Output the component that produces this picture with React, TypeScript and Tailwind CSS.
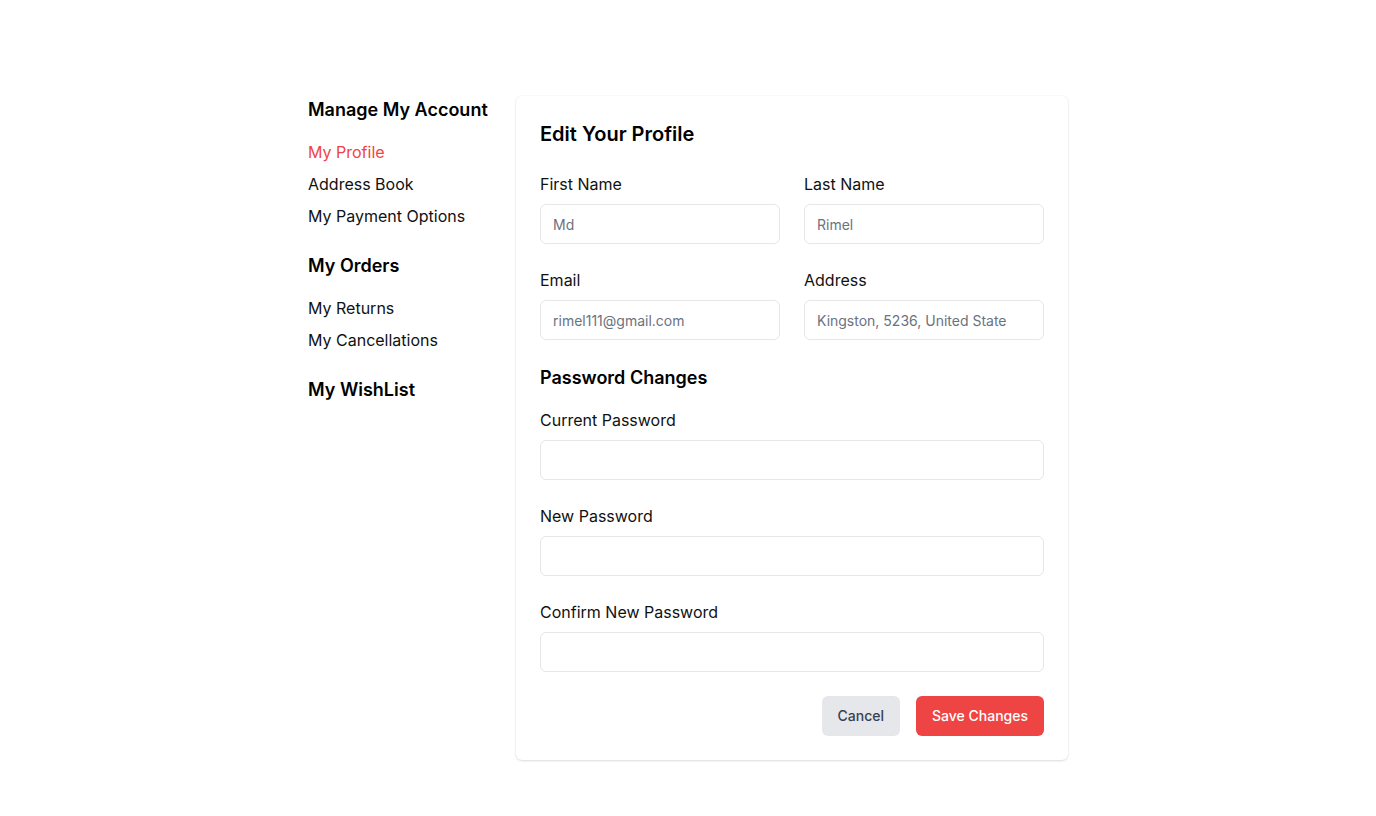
import React from "react";

function Field({ label, placeholder }: { label: string; placeholder?: string }) {
  return (
    <div className="flex flex-col">
      <label className="text-base leading-6 text-[#111] mb-2">{label}</label>
      <input
        className="h-10 w-full rounded-md border border-[#e5e7eb] px-3 text-sm text-gray-700 placeholder:text-[#6b7280] outline-none"
        placeholder={placeholder}
      />
    </div>
  );
}

export default function App() {
  return (
    <div className="min-h-screen bg-white" style={{ fontFamily: "Inter, 'Noto Sans', sans-serif" }}>
      <div className="mx-auto w-[760px] pt-24 flex">
        <aside className="w-[208px] shrink-0">
          <h2 className="text-lg leading-7 font-semibold text-black mb-4">Manage My Account</h2>
          <ul className="space-y-2 text-base leading-6 text-[#111]">
            <li className="text-[#ef4444]">My Profile</li>
            <li>Address Book</li>
            <li>My Payment Options</li>
          </ul>
          <h2 className="text-lg leading-7 font-semibold text-black mt-6 mb-4">My Orders</h2>
          <ul className="space-y-2 text-base leading-6 text-[#111]">
            <li>My Returns</li>
            <li>My Cancellations</li>
          </ul>
          <h2 className="text-lg leading-7 font-semibold text-black mt-6">My WishList</h2>
        </aside>
        <main className="flex-1 rounded-md bg-white p-6 shadow-[0_0_0_1px_rgba(0,0,0,0.02),0_1px_3px_rgba(0,0,0,0.08),0_1px_2px_rgba(0,0,0,0.05)]">
          <h1 className="text-xl leading-7 font-semibold text-black mb-6">Edit Your Profile</h1>
          <div className="grid grid-cols-2 gap-6">
            <Field label="First Name" placeholder="Md" />
            <Field label="Last Name" placeholder="Rimel" />
            <Field label="Email" placeholder="rimel111@gmail.com" />
            <Field label="Address" placeholder="Kingston, 5236, United State" />
          </div>
          <h2 className="text-lg leading-7 font-semibold text-black mt-6 mb-4">Password Changes</h2>
          <div className="flex flex-col gap-6">
            <Field label="Current Password" />
            <Field label="New Password" />
            <Field label="Confirm New Password" />
          </div>
          <div className="flex justify-end gap-4 mt-6">
            <button className="h-10 rounded-md bg-[#e5e7eb] px-4 text-sm font-medium text-[#374151]">Cancel</button>
            <button className="h-10 rounded-md bg-[#ef4444] px-4 text-sm font-medium text-white">Save Changes</button>
          </div>
        </main>
      </div>
    </div>
  );
}
